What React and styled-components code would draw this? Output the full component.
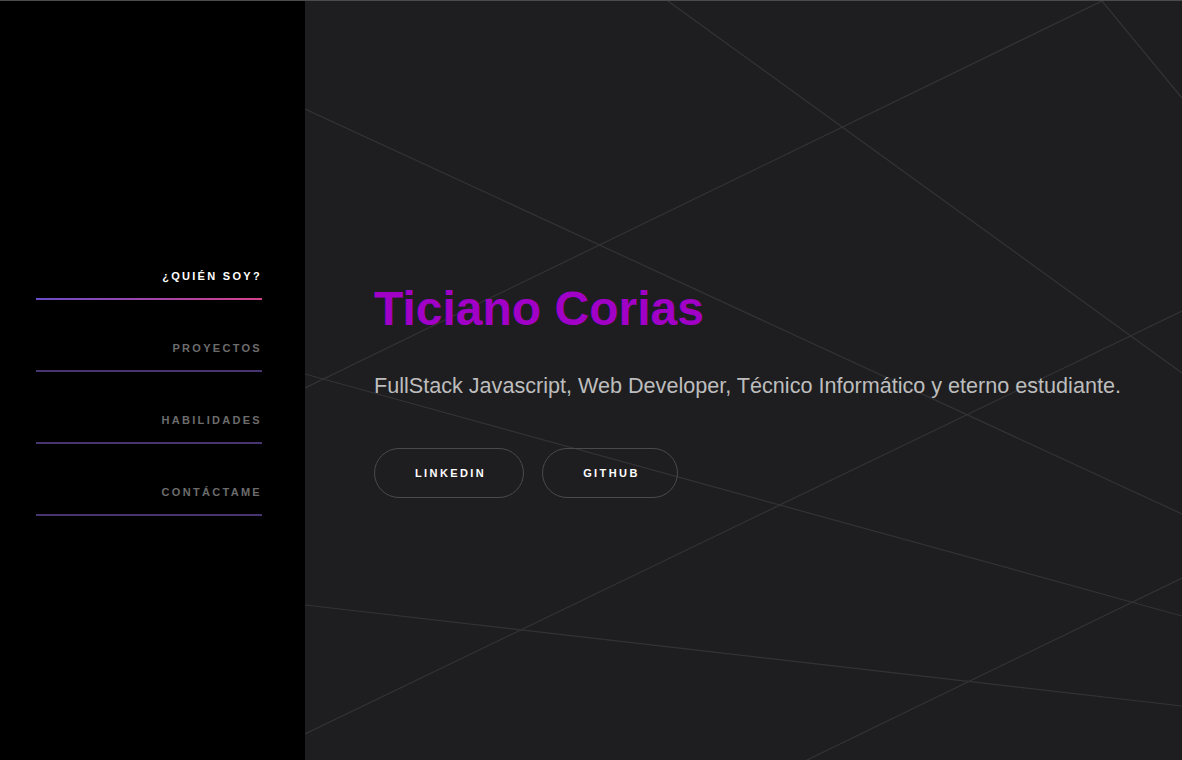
import React from 'react';
import styled, { createGlobalStyle, css } from 'styled-components';

const GlobalStyle = createGlobalStyle`
  * {
    box-sizing: border-box;
  }

  html, body {
    margin: 0;
    padding: 0;
    background-color: #000;
    font-family: "Liberation Sans", Arial, sans-serif;
  }
`;

const Page = styled.div`
  display: flex;
  width: 100%;
  height: 760px;
  border-top: 1px solid #4b4b4b;
  overflow: hidden;
`;

const Sidebar = styled.aside`
  flex: 0 0 305px;
  display: flex;
  flex-direction: column;
  justify-content: center;
  padding: 25px 43px 0 36px;
  background-color: #000;
`;

const NavList = styled.nav`
  display: flex;
  flex-direction: column;
  gap: 42px;
`;

const NavItem = styled.a`
  display: block;
  padding-bottom: 15px;
  border-bottom: 2px solid #47356f;
  text-align: right;
  font-size: 11px;
  line-height: 13px;
  font-weight: 700;
  letter-spacing: 2.3px;
  color: #6c6c6c;
  text-decoration: none;
  cursor: pointer;

  ${({ $active }) =>
    $active &&
    css`
      color: #fff;
      border-image: linear-gradient(90deg, #6a4cc8, #d6418c) 1;
    `}
`;

const Main = styled.main`
  position: relative;
  flex: 1;
  display: flex;
  flex-direction: column;
  justify-content: center;
  padding: 17px 40px 0 69px;
  background-color: #1e1e20;
`;

const Backdrop = styled.svg`
  position: absolute;
  inset: 0;
  width: 100%;
  height: 100%;
  pointer-events: none;
`;

const Content = styled.div`
  position: relative;
  display: flex;
  flex-direction: column;
  align-items: flex-start;
`;

const Title = styled.h1`
  margin: 0 0 37px;
  font-size: 48px;
  font-weight: 700;
  color: #a100c7;
`;

const Subtitle = styled.p`
  margin: 0 0 49px;
  font-size: 21.6px;
  color: #bdbdbd;
`;

const Actions = styled.div`
  display: flex;
  gap: 18px;
`;

const LinkButton = styled.a`
  display: inline-flex;
  align-items: center;
  height: 50px;
  padding: 0 37px 0 40px;
  border: 1px solid #4a4a4c;
  border-radius: 25px;
  font-size: 11px;
  font-weight: 700;
  letter-spacing: 2.4px;
  color: #fff;
  text-decoration: none;
  cursor: pointer;
`;

const lines = [
  [668, 0, 1182, 372],
  [1102, 0, 1182, 97],
  [1102, 0, 305, 387],
  [305, 108, 1182, 513],
  [305, 373, 1182, 615],
  [305, 733, 1182, 310],
  [305, 604, 1182, 705],
  [805, 760, 1182, 577],
];

const navItems = ['¿QUIÉN SOY?', 'PROYECTOS', 'HABILIDADES', 'CONTÁCTAME'];

function App() {
  return (
    <>
      <GlobalStyle />
      <Page>
        <Sidebar>
          <NavList>
            {navItems.map((item, i) => (
              <NavItem key={item} $active={i === 0}>
                {item}
              </NavItem>
            ))}
          </NavList>
        </Sidebar>
        <Main>
          <Backdrop viewBox="305 0 877 759" preserveAspectRatio="none">
            {lines.map(([x1, y1, x2, y2], i) => (
              <line
                key={i}
                x1={x1}
                y1={y1}
                x2={x2}
                y2={y2}
                stroke="#333335"
                strokeWidth="1.2"
              />
            ))}
          </Backdrop>
          <Content>
            <Title>Ticiano Corias</Title>
            <Subtitle>
              FullStack Javascript, Web Developer, Técnico Informático y eterno estudiante.
            </Subtitle>
            <Actions>
              <LinkButton>LINKEDIN</LinkButton>
              <LinkButton>GITHUB</LinkButton>
            </Actions>
          </Content>
        </Main>
      </Page>
    </>
  );
}

export default App;
